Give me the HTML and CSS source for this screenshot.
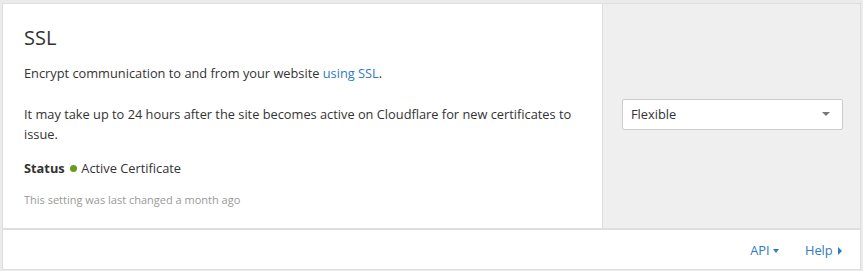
FILE: index.html
```html
<!DOCTYPE html>
<html>
<head>
  <meta charset="UTF-8">
  <title>SSL</title>
  <link rel="stylesheet" href="styles.css">
</head>
<body>
<div class="card">
  <div class="card-body">
    <div class="card-main">
      <h2>SSL</h2>
      <p class="intro">Encrypt communication to and from your website <a href="#">using SSL</a>.</p>
      <p>It may take up to 24 hours after the site becomes active on Cloudflare for new certificates to issue.</p>
      <p class="status"><strong>Status</strong> <span class="dot"></span> Active Certificate</p>
      <p class="changed">This setting was last changed a month ago</p>
    </div>
    <div class="card-control">
      <div class="select">
        <span>Flexible</span>
        <span class="caret-down"></span>
      </div>
    </div>
  </div>
  <div class="card-footer">
    <a href="#">API <span class="caret-down small"></span></a>
    <a href="#">Help <span class="caret-right"></span></a>
  </div>
</div>
</body>
</html>
```

FILE: styles.css
```css
body {
  margin: 0;
  padding: 3px 2px 1px 2px;
  background: #ebebeb;
  font-family: "Open Sans", sans-serif;
  color: #333;
}

.card {
  background: #fff;
  border: 1px solid #dedede;
}

.card-body {
  display: flex;
  border-bottom: 2px solid #dedede;
}

.card-main {
  width: 578px;
  padding: 19px 0 18px 21px;
  border-right: 1px solid #dedede;
}

h2 {
  margin: 0 0 10px 0;
  font-size: 20px;
  font-weight: 400;
  line-height: 30px;
}

p {
  margin: 0 0 14px 0;
  font-size: 12.8px;
  line-height: 20px;
}

p.intro {
  margin-bottom: 21px;
}

a {
  color: #2f7bbf;
  text-decoration: none;
}

.status {
  margin-bottom: 12px;
}

.dot {
  display: inline-block;
  width: 7px;
  height: 7px;
  border-radius: 50%;
  background: #6a9a1f;
  vertical-align: 1px;
  margin: 0 1px 0 2px;
}

.changed {
  margin: 0;
  font-size: 11px;
  color: #999;
}

.card-control {
  flex: 1;
  background: #efefef;
  display: flex;
  align-items: center;
  padding: 0 17px 4px 19px;
}

.select {
  flex: 1;
  height: 29px;
  background: #fff;
  border: 1px solid #ccc;
  border-radius: 2px;
  display: flex;
  align-items: center;
  justify-content: space-between;
  padding: 0 12px 0 8px;
  font-size: 12.8px;
}

.caret-down {
  display: inline-block;
  border-left: 4px solid transparent;
  border-right: 4px solid transparent;
  border-top: 4px solid #777;
}

.caret-down.small {
  border-width: 4px 3px 0 3px;
  border-top-color: #2f7bbf;
  vertical-align: 2px;
  margin-left: 0;
}

.caret-right {
  display: inline-block;
  border-top: 4px solid transparent;
  border-bottom: 4px solid transparent;
  border-left: 4px solid #2f7bbf;
  margin-left: 2px;
  vertical-align: 0;
}

.card-footer {
  display: flex;
  justify-content: flex-end;
  gap: 26px;
  height: 39px;
  align-items: center;
  padding-right: 18px;
  font-size: 12.8px;
}
```
